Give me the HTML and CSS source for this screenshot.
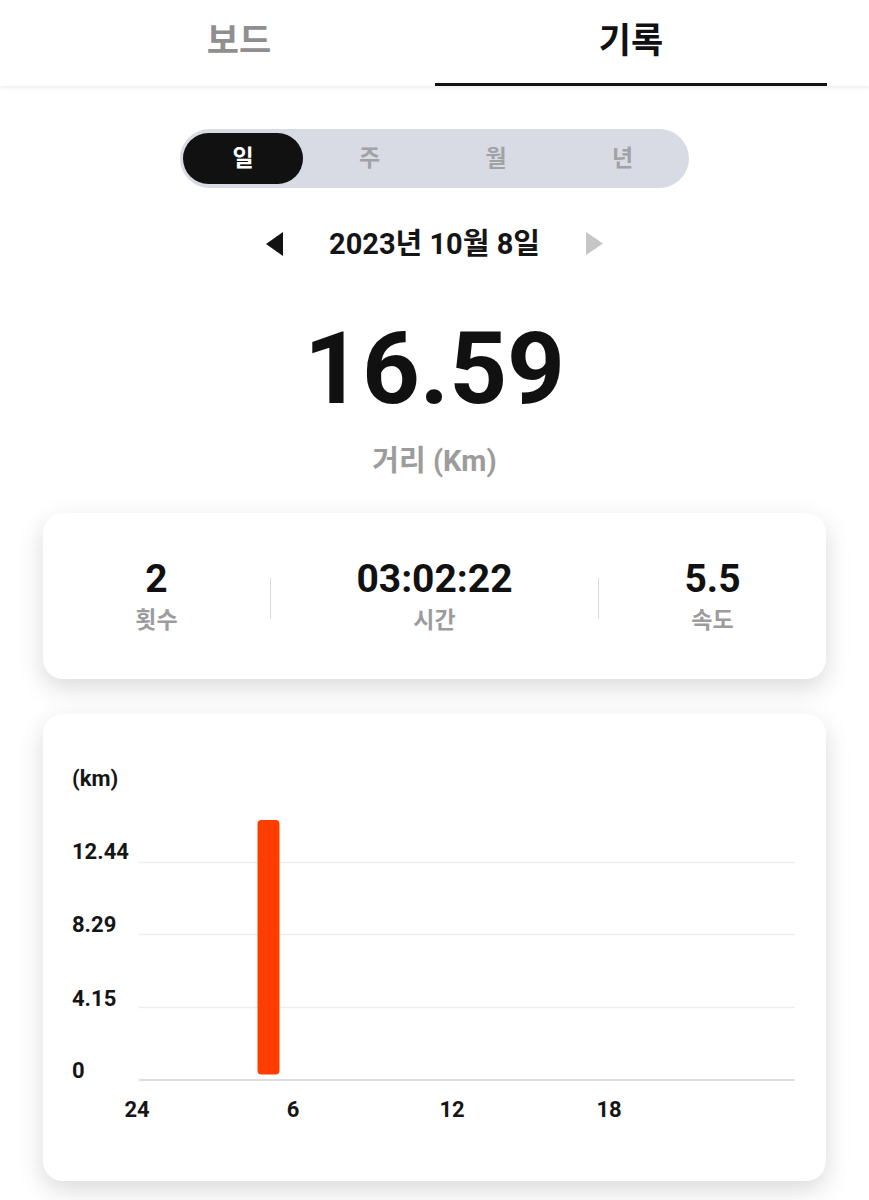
FILE: index.html
```html
<!DOCTYPE html>
<html lang="ko">
<head>
<meta charset="utf-8">
<link rel="stylesheet" href="styles.css">
</head>
<body>
<header class="tabs">
  <div class="tab">보드</div>
  <div class="tab active">기록</div>
</header>
<main class="content">
  <div class="segment">
    <div class="seg active">일</div>
    <div class="seg">주</div>
    <div class="seg">월</div>
    <div class="seg">년</div>
  </div>
  <div class="date-row">
    <svg class="arrow" width="18" height="24" viewBox="0 0 18 24"><polygon points="17,0 17,24 0,12" fill="#111"/></svg>
    <div class="date">2023년 10월 8일</div>
    <svg class="arrow" width="18" height="24" viewBox="0 0 18 24"><polygon points="1,0 1,23 18,11.5" fill="#c6c6c6"/></svg>
  </div>
  <div class="big">16.59</div>
  <div class="big-label">거리 (Km)</div>

  <section class="card stats">
    <div class="stat"><div class="val">2</div><div class="lbl">횟수</div></div>
    <div class="divider"></div>
    <div class="stat"><div class="val">03:02:22</div><div class="lbl">시간</div></div>
    <div class="divider"></div>
    <div class="stat"><div class="val">5.5</div><div class="lbl">속도</div></div>
  </section>

  <section class="card chart-card">
    <svg class="chart" width="783" height="467" viewBox="43 714 783 467">
      <g class="grid">
        <line x1="139" y1="862.5" x2="795" y2="862.5"/>
        <line x1="139" y1="934.5" x2="795" y2="934.5"/>
        <line x1="139" y1="1007.5" x2="795" y2="1007.5"/>
      </g>
      <line class="axis" x1="139" y1="1080" x2="795" y2="1080"/>
      <rect class="bar" x="257.5" y="820" width="22" height="254.5" rx="4" ry="4"/>
      <g class="ylab">
        <text x="72" y="786">(km)</text>
        <text x="72" y="859">12.44</text>
        <text x="72" y="932">8.29</text>
        <text x="72" y="1006">4.15</text>
        <text x="72" y="1078">0</text>
      </g>
      <g class="xlab">
        <text x="137" y="1117">24</text>
        <text x="293" y="1117">6</text>
        <text x="452" y="1117">12</text>
        <text x="609" y="1117">18</text>
      </g>
    </svg>
  </section>
</main>
</body>
</html>
```

FILE: styles.css
```css
html, body {
  margin: 0;
  padding: 0;
  background: #ffffff;
}
body {
  font-family: Roboto, "Noto Sans CJK KR", sans-serif;
  color: #111111;
  width: 869px;
  height: 1200px;
  overflow: hidden;
}
.tabs {
  display: grid;
  grid-template-columns: 392px 392px;
  padding: 0 42px 0 43px;
  height: 86px;
  box-shadow: 0 2px 4px rgba(0, 0, 0, 0.07);
  position: relative;
  z-index: 1;
  background: #fff;
}
.tab {
  height: 83px;
  line-height: 83px;
  text-align: center;
  font-size: 35px;
  font-weight: 700;
  color: #8f8f8f;
  border-bottom: 3px solid transparent;
}
.tab.active {
  color: #111;
  border-bottom-color: #111;
}
.content {
  display: flex;
  flex-direction: column;
  align-items: center;
}
.segment {
  margin-top: 43px;
  width: 509px;
  height: 59px;
  box-sizing: border-box;
  padding: 4px 3px;
  background: #d9dbe4;
  border-radius: 30px;
  display: flex;
  gap: 6.5px;
}
.seg {
  width: 120px;
  height: 51px;
  line-height: 51px;
  text-align: center;
  border-radius: 26px;
  font-size: 23px;
  font-weight: 700;
  color: #a2a2a6;
}
.seg.active {
  background: #111;
  color: #fff;
}
.date-row {
  margin-top: 36px;
  height: 40px;
  display: flex;
  align-items: center;
  gap: 45px;
}
.arrow {
  display: block;
}
.date {
  font-size: 29px;
  font-weight: 700;
  line-height: 40px;
  color: #151515;
}
.big {
  margin-top: 50px;
  font-size: 101px;
  font-weight: 700;
  line-height: 110px;
  color: #111;
}
.big-label {
  margin-top: 19px;
  font-size: 29px;
  font-weight: 700;
  line-height: 36px;
  color: #9c9c9c;
}
.card {
  width: 783px;
  background: #fff;
  border-radius: 20px;
  box-shadow: 0 9px 26px rgba(0, 0, 0, 0.15);
}
.stats {
  margin-top: 34px;
  height: 166px;
  display: grid;
  grid-template-columns: 227px 1px 327px 1px 227px;
  align-items: center;
}
.stat {
  display: flex;
  flex-direction: column;
  align-items: center;
  gap: 6px;
}
.val {
  font-size: 39px;
  font-weight: 700;
  line-height: 44px;
  color: #111;
}
.lbl {
  font-size: 23px;
  font-weight: 700;
  line-height: 28px;
  color: #9c9c9c;
}
.divider {
  width: 1px;
  height: 41px;
  background: #dadada;
  margin-top: 4px;
}
.chart-card {
  margin-top: 35px;
  height: 467px;
}
.chart {
  display: block;
}
.grid line {
  stroke: #eeeeee;
  stroke-width: 1.5;
}
.axis {
  stroke: #dcdce2;
  stroke-width: 2;
}
.bar {
  fill: #ff3d00;
}
.chart text {
  font-family: Roboto, sans-serif;
  font-weight: 700;
  fill: #151515;
}
.ylab text {
  font-size: 22px;
}
.xlab text {
  font-size: 22px;
  text-anchor: middle;
}
```
